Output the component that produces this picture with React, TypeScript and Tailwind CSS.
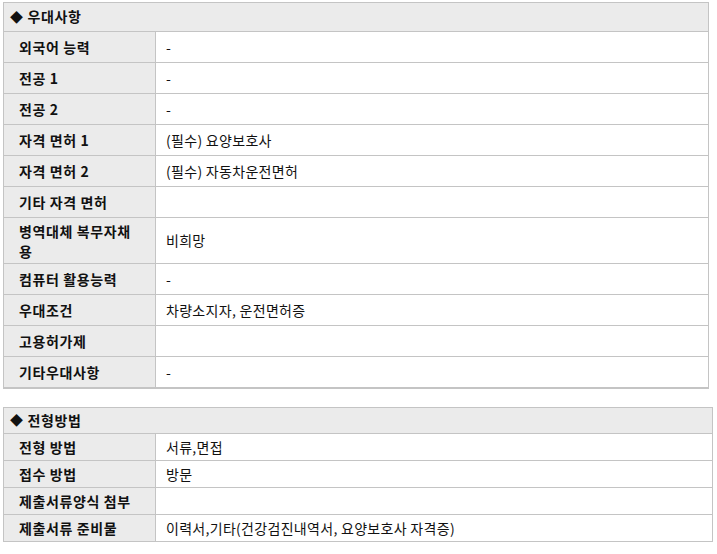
import React from "react";

type Row = { label: string; value: string; tall?: boolean };

const rows1: Row[] = [
  { label: "외국어 능력", value: "-" },
  { label: "전공 1", value: "-" },
  { label: "전공 2", value: "-" },
  { label: "자격 면허 1", value: "(필수) 요양보호사" },
  { label: "자격 면허 2", value: "(필수) 자동차운전면허" },
  { label: "기타 자격 면허", value: "" },
  { label: "병역대체 복무자채용", value: "비희망", tall: true },
  { label: "컴퓨터 활용능력", value: "-" },
  { label: "우대조건", value: "차량소지자, 운전면허증" },
  { label: "고용허가제", value: "" },
  { label: "기타우대사항", value: "-" },
];

const rows2: Row[] = [
  { label: "전형 방법", value: "서류,면접" },
  { label: "접수 방법", value: "방문" },
  { label: "제출서류양식 첨부", value: "" },
  { label: "제출서류 준비물", value: "이력서,기타(건강검진내역서, 요양보호사 자격증)" },
];

function Section({
  title,
  rows,
  rowH,
  headH,
  width,
  bottom,
}: {
  title: string;
  rows: Row[];
  rowH: string;
  headH: string;
  width: string;
  bottom: string;
}) {
  return (
    <div className={`${width} border-x border-t border-[#c4c4c4] ${bottom}`}>
      <div
        className={`flex items-center ${headH} bg-[#ebebeb] pl-[6px] pb-[1px] font-bold text-[14px] tracking-[0.6px] text-[#111] border-b border-[#c4c4c4]`}
      >
        <span className="text-[13px] mr-[4px]">◆</span>
        <span>{title}</span>
      </div>
      {rows.map((r, i) => (
        <div
          key={i}
          className={`grid grid-cols-[152px_1fr] ${
            i < rows.length - 1 ? "border-b border-[#c4c4c4]" : ""
          }`}
        >
          <div
            className={`flex items-center bg-[#ebebeb] border-r border-[#c4c4c4] pl-[15px] pr-[12px] font-bold text-[14px] tracking-[0.6px] leading-[20px] text-[#111] ${
              r.tall ? "h-[45px] py-[2px]" : `${rowH} pb-[1px]`
            }`}
          >
            {r.label}
          </div>
          <div
            className={`flex items-center bg-white pl-[10px] pb-[1px] text-[14px] tracking-[0.3px] leading-[20px] text-[#111] ${
              r.tall ? "h-[45px]" : rowH
            }`}
          >
            {r.value}
          </div>
        </div>
      ))}
    </div>
  );
}

export default function App() {
  return (
    <div
      className="bg-white w-[717px] h-[554px] pt-[2px] pl-[3px]"
      style={{ fontFamily: '"Noto Sans CJK KR", "Noto Sans", sans-serif' }}
    >
      <Section
        title="우대사항"
        rows={rows1}
        rowH="h-[30px]"
        headH="h-[29px]"
        width="w-[706px]"
        bottom="border-b-2"
      />
      <div className="h-[18px]" />
      <Section
        title="전형방법"
        rows={rows2}
        rowH="h-[26px]"
        headH="h-[26px]"
        width="w-[710px]"
        bottom="border-b"
      />
    </div>
  );
}
